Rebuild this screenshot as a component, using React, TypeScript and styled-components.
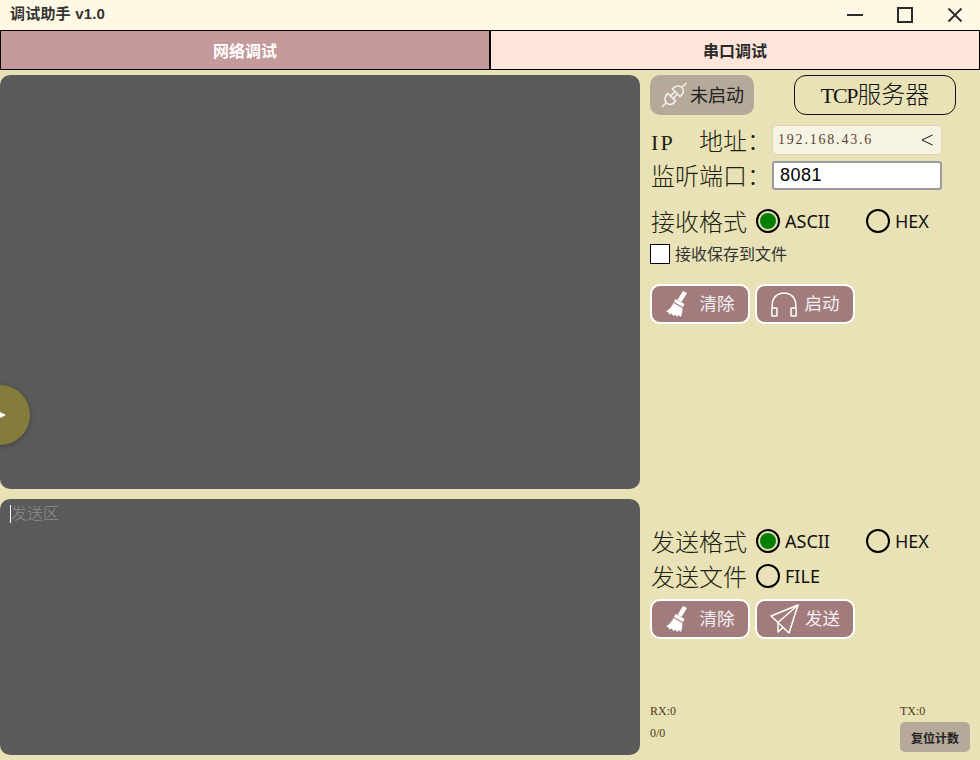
import React from "react";
import styled, { createGlobalStyle } from "styled-components";

const SERIF = `"Liberation Serif", "Noto Sans CJK SC", serif`;
const SANS = `"Noto Sans", "Noto Sans CJK SC", sans-serif`;
const ARIAL = `"Liberation Sans", "Noto Sans CJK SC", sans-serif`;

const GlobalStyle = createGlobalStyle`
  html, body {
    margin: 0;
    padding: 0;
    background: #e9e2b7;
    overflow: hidden;
  }
  * {
    box-sizing: border-box;
  }
`;

const Page = styled.div`
  position: relative;
  width: 980px;
  height: 760px;
  overflow: hidden;
  background: #e9e2b7;
  display: flex;
  flex-direction: column;
`;

const TitleBar = styled.div`
  height: 30px;
  flex: none;
  display: flex;
  align-items: center;
  justify-content: space-between;
  padding-left: 10px;
  background: #fff8e4;
`;

const AppName = styled.span`
  font: bold 15px/28px ${ARIAL};
  letter-spacing: 0.2px;
  color: #333;
  padding-bottom: 2px;
`;

const WindowControls = styled.div`
  display: flex;
  height: 30px;
`;

const WindowButton = styled.div`
  width: 50px;
  height: 30px;
  display: flex;
  align-items: center;
  justify-content: center;
  color: #2b2b2b;
`;

const Tabs = styled.div`
  height: 40px;
  flex: none;
  display: grid;
  grid-template-columns: 490px 490px;
`;

const Tab = styled.div<{ $active?: boolean }>`
  display: flex;
  align-items: center;
  justify-content: center;
  border: 1px solid #000;
  font: bold 16px ${ARIAL};
  color: ${(p) => (p.$active ? "#fff" : "#2a2a2a")};
  background: ${(p) => (p.$active ? "#c49a9a" : "#ffe4d9")};
`;

const Main = styled.div`
  display: grid;
  grid-template-columns: 640px 340px;
  grid-template-rows: 414px 256px;
  row-gap: 10px;
  padding-top: 5px;
`;

const Screen = styled.div`
  background: #5a5a5a;
  border-radius: 10px;
  padding: 6px 10px;
`;

const Placeholder = styled.span`
  display: inline-block;
  height: 18px;
  border-left: 1px solid #fff;
  font: 300 16px/17px ${SERIF};
  color: #8d8d8d;
`;

const SidePanel = styled.div`
  padding-left: 10px;
  display: flex;
  flex-direction: column;
  align-items: flex-start;
`;

const StatusRow = styled.div`
  display: flex;
  align-items: center;
  gap: 40px;
`;

const StatusButton = styled.div`
  width: 104px;
  height: 40px;
  border-radius: 10px;
  background: #b7a99a;
  display: flex;
  align-items: center;
  justify-content: flex-end;
  padding: 0 10px 1px 0;
  gap: 3px;
  font: 18px/24px ${SANS};
  color: #222;
`;

const ModeButton = styled.div`
  width: 162px;
  height: 40px;
  border: 1px solid #111;
  border-radius: 12px;
  display: flex;
  align-items: center;
  justify-content: center;
  padding-top: 1px;
  font: 300 24px/30px ${SERIF};
  color: #111;
`;

const Latin = styled.span<{ $spacing: number }>`
  font-size: 22px;
  letter-spacing: ${(p) => p.$spacing}px;
`;

const FieldRow = styled.div<{ $top: number }>`
  display: flex;
  align-items: center;
  margin-top: ${(p) => p.$top}px;
  height: 30px;
`;

const Label = styled.span<{ $width: number }>`
  width: ${(p) => p.$width}px;
  height: 30px;
  padding-left: 1px;
  flex: none;
  font: 300 24px/34px ${SERIF};
  color: #221f10;
  white-space: pre;
`;

const AddressSelect = styled.div`
  width: 170px;
  height: 30px;
  display: flex;
  align-items: center;
  justify-content: space-between;
  padding: 0 8px 0 5px;
  border: 1px solid #e0d5ae;
  border-radius: 5px;
  background: #f7f3e3;
  font: 14px ${SERIF};
  letter-spacing: 1.8px;
  color: #5a3f34;
`;

const PortInput = styled.input`
  width: 170px;
  height: 29px;
  padding: 0 6px;
  border: 2px solid #9a9aa0;
  border-radius: 3px;
  background: #fff;
  outline: none;
  font: 18px ${ARIAL};
  letter-spacing: 0.5px;
  color: #000;
`;

const RadioRow = styled.div<{ $top: number }>`
  display: flex;
  align-items: center;
  margin-top: ${(p) => p.$top}px;
  height: 30px;
`;

const RadioItem = styled.div`
  width: 110px;
  display: flex;
  align-items: center;
  gap: 5px;
  font: 18px ${SANS};
  color: #111;
`;

const RadioMark = styled.span<{ $checked?: boolean }>`
  width: 24px;
  height: 24px;
  flex: none;
  border: 2px solid #000;
  border-radius: 50%;
  display: flex;
  align-items: center;
  justify-content: center;
  &::after {
    content: "";
    display: ${(p) => (p.$checked ? "block" : "none")};
    width: 16px;
    height: 16px;
    border-radius: 50%;
    background: #008000;
  }
`;

const CheckRow = styled.div`
  margin-top: 8px;
  height: 20px;
  display: flex;
  align-items: flex-start;
  gap: 5px;
  font: 16px/22px ${ARIAL};
  color: #333;
`;

const CheckBox = styled.span`
  width: 20px;
  height: 20px;
  border: 1px solid #000;
  background: #fff;
`;

const ButtonRow = styled.div<{ $top: number }>`
  display: flex;
  gap: 5px;
  margin-top: ${(p) => p.$top}px;
`;

const ActionButton = styled.div<{ $gap: number }>`
  width: 100px;
  height: 40px;
  border: 2px solid #fff;
  border-radius: 10px;
  background: #a27c7c;
  display: flex;
  align-items: center;
  justify-content: center;
  gap: ${(p) => p.$gap}px;
  font: 17.5px/24px ${ARIAL};
  color: #f2eef2;
`;

const Counters = styled.div`
  margin-top: auto;
  width: 320px;
  height: 50px;
  margin-bottom: 3px;
  display: flex;
  justify-content: space-between;
  font: 12px/18px ${SERIF};
  color: #4a3c14;
`;

const CounterColumn = styled.div`
  display: flex;
  flex-direction: column;
  gap: 4px;
`;

const TxColumn = styled.div`
  width: 70px;
  display: flex;
  flex-direction: column;
  gap: 2px;
`;

const ResetButton = styled.div`
  width: 70px;
  height: 30px;
  border-radius: 5px;
  background: #b7a99a;
  display: flex;
  align-items: center;
  justify-content: center;
  font: bold 12px ${ARIAL};
  color: #222;
`;

const Flyout = styled.div`
  position: absolute;
  left: -30px;
  top: 385px;
  width: 60px;
  height: 60px;
  border-radius: 50%;
  background: #857b3b;
  box-shadow: 0 1px 5px rgba(0, 0, 0, 0.3);
  display: flex;
  align-items: center;
  justify-content: flex-end;
  padding-right: 24px;
`;

const FlyoutArrow = styled.span`
  width: 0;
  height: 0;
  border-top: 3px solid transparent;
  border-bottom: 3px solid transparent;
  border-left: 6px solid #fff;
`;

const BroomIcon = () => (
  <svg width="23" height="26" viewBox="0 0 23 26" fill="#fff">
    <path d="M17 0 21 2 15.5 11 11.5 8.8Z" />
    <path d="M9.5 8 18.5 13 17 16 8 11Z" />
    <path d="M7.5 12 16.5 17C16.5 20 16 23 15 26L12.5 24 11.5 26 9 23.8 7.5 25 5.5 22.5 3.5 23.5 2 21 0 20.5C3.5 18.5 6 15.5 7.5 12Z" />
  </svg>
);

const HeadphonesIcon = () => (
  <svg width="26" height="25" viewBox="0 0 26 25" fill="none" stroke="#fff" strokeWidth="1.5">
    <path d="M1.2 16V13C1.2 6 6 1 13 1S24.8 6 24.8 13V16" />
    <rect x="0.8" y="16" width="5.2" height="8" rx="0.8" />
    <rect x="20" y="16" width="5.2" height="8" rx="0.8" />
  </svg>
);

const PlaneIcon = () => (
  <svg width="29" height="30" viewBox="0 0 29 30" fill="none" stroke="#fff" strokeWidth="1.5" strokeLinejoin="round">
    <path d="M28 1 1 12 8 18.5 19 29Z" />
    <path d="M28 1 8 18.5V28L13 23.5" />
  </svg>
);

const PlugIcon = () => (
  <svg width="26" height="26" viewBox="0 0 26 26" fill="none" stroke="#f3f0ea" strokeWidth="1.6">
    <path d="M1 25 5 21" />
    <path d="M7 11.5 14.5 19C12.5 22.5 8 23.5 5.5 21 3 18.5 3.5 14 7 11.5Z" />
    <path d="M11.5 7 19 14.5C22.5 12.5 23.5 8 21 5.5 18.5 3 14 3.5 11.5 7Z" />
    <path d="M9.5 14 14 9.5M12 16.5 16.5 12" />
    <path d="M21 5 25.5 1" />
  </svg>
);

const ChevronIcon = () => (
  <svg width="12" height="12" viewBox="0 0 12 12" fill="none" stroke="#111" strokeWidth="1">
    <path d="M11.5 1 1 6 11.5 11" />
  </svg>
);

const App: React.FC = () => {
  return (
    <Page>
      <GlobalStyle />
      <TitleBar>
        <AppName>调试助手 v1.0</AppName>
        <WindowControls>
          <WindowButton>
            <svg width="16" height="16" viewBox="0 0 16 16" stroke="currentColor" strokeWidth="2">
              <path d="M0 8H16" />
            </svg>
          </WindowButton>
          <WindowButton>
            <svg width="16" height="16" viewBox="0 0 16 16" fill="none" stroke="currentColor" strokeWidth="2">
              <rect x="1" y="1" width="14" height="14" />
            </svg>
          </WindowButton>
          <WindowButton>
            <svg width="16" height="16" viewBox="0 0 16 16" stroke="currentColor" strokeWidth="1.8">
              <path d="M1.5 1.5 14.5 14.5M14.5 1.5 1.5 14.5" />
            </svg>
          </WindowButton>
        </WindowControls>
      </TitleBar>

      <Tabs>
        <Tab $active>网络调试</Tab>
        <Tab>串口调试</Tab>
      </Tabs>

      <Main>
        <Screen />
        <SidePanel>
          <StatusRow>
            <StatusButton>
              <PlugIcon />
              未启动
            </StatusButton>
            <ModeButton>
              <span>
                <Latin $spacing={-1.3}>TCP</Latin>服务器
              </span>
            </ModeButton>
          </StatusRow>
          <FieldRow $top={10}>
            <Label $width={122}>
              <Latin $spacing={2.2}>IP</Latin>
              {"\u3000"}地址：
            </Label>
            <AddressSelect>
              192.168.43.6
              <ChevronIcon />
            </AddressSelect>
          </FieldRow>
          <FieldRow $top={5}>
            <Label $width={122}>监听端口：</Label>
            <PortInput defaultValue="8081" />
          </FieldRow>
          <RadioRow $top={16}>
            <Label $width={106}>接收格式</Label>
            <RadioItem>
              <RadioMark $checked />
              ASCII
            </RadioItem>
            <RadioItem>
              <RadioMark />
              HEX
            </RadioItem>
          </RadioRow>
          <CheckRow>
            <CheckBox />
            接收保存到文件
          </CheckRow>
          <ButtonRow $top={20}>
            <ActionButton $gap={11}>
              <BroomIcon />
              清除
            </ActionButton>
            <ActionButton $gap={8}>
              <HeadphonesIcon />
              启动
            </ActionButton>
          </ButtonRow>
        </SidePanel>

        <Screen>
          <Placeholder>发送区</Placeholder>
        </Screen>
        <SidePanel>
          <RadioRow $top={27}>
            <Label $width={106}>发送格式</Label>
            <RadioItem>
              <RadioMark $checked />
              ASCII
            </RadioItem>
            <RadioItem>
              <RadioMark />
              HEX
            </RadioItem>
          </RadioRow>
          <RadioRow $top={5}>
            <Label $width={106}>发送文件</Label>
            <RadioItem>
              <RadioMark />
              FILE
            </RadioItem>
          </RadioRow>
          <ButtonRow $top={8}>
            <ActionButton $gap={11}>
              <BroomIcon />
              清除
            </ActionButton>
            <ActionButton $gap={6}>
              <PlaneIcon />
              发送
            </ActionButton>
          </ButtonRow>
          <Counters>
            <CounterColumn>
              <span>RX:0</span>
              <span>0/0</span>
            </CounterColumn>
            <TxColumn>
              <span>TX:0</span>
              <ResetButton>复位计数</ResetButton>
            </TxColumn>
          </Counters>
        </SidePanel>
      </Main>

      <Flyout>
        <FlyoutArrow />
      </Flyout>
    </Page>
  );
};

export default App;
